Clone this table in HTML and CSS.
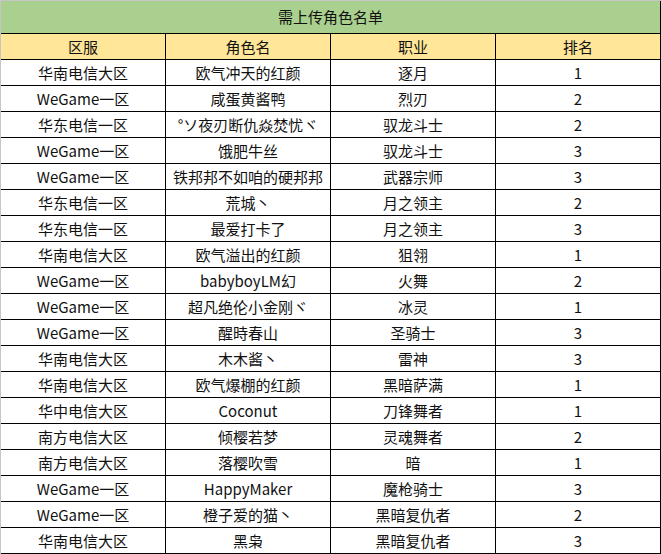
FILE: index.html
```html
<!DOCTYPE html>
<html lang="zh-CN">
<head>
<meta charset="utf-8">
<title>需上传角色名单</title>
<link rel="stylesheet" href="styles.css">
</head>
<body>
<table class="sheet">
  <colgroup>
    <col class="c"><col class="c"><col class="c"><col class="c">
  </colgroup>
  <tr class="title-row"><td colspan="4" class="title">需上传角色名单</td></tr>
  <tr class="head-row"><td>区服</td><td>角色名</td><td>职业</td><td>排名</td></tr>
  <tr><td>华南电信大区</td><td>欧气冲天的红颜</td><td>逐月</td><td>1</td></tr>
  <tr><td>WeGame一区</td><td>咸蛋黄酱鸭</td><td>烈刃</td><td>2</td></tr>
  <tr><td>华东电信一区</td><td>°ソ夜刃断仇焱焚忧ヾ</td><td>驭龙斗士</td><td>2</td></tr>
  <tr><td>WeGame一区</td><td>饿肥牛丝</td><td>驭龙斗士</td><td>3</td></tr>
  <tr><td>WeGame一区</td><td>铁邦邦不如咱的硬邦邦</td><td>武器宗师</td><td>3</td></tr>
  <tr><td>华东电信一区</td><td>荒城丶</td><td>月之领主</td><td>2</td></tr>
  <tr><td>华东电信一区</td><td>最爱打卡了</td><td>月之领主</td><td>3</td></tr>
  <tr><td>华南电信大区</td><td>欧气溢出的红颜</td><td>狙翎</td><td>1</td></tr>
  <tr><td>WeGame一区</td><td>babyboyLM幻</td><td>火舞</td><td>2</td></tr>
  <tr><td>WeGame一区</td><td>超凡绝伦小金刚ヾ</td><td>冰灵</td><td>1</td></tr>
  <tr><td>WeGame一区</td><td>醒時春山</td><td>圣骑士</td><td>3</td></tr>
  <tr><td>华南电信大区</td><td>木木酱丶</td><td>雷神</td><td>3</td></tr>
  <tr><td>华南电信大区</td><td>欧气爆棚的红颜</td><td>黑暗萨满</td><td>1</td></tr>
  <tr><td>华中电信大区</td><td>Coconut</td><td>刀锋舞者</td><td>1</td></tr>
  <tr><td>南方电信大区</td><td>倾樱若梦</td><td>灵魂舞者</td><td>2</td></tr>
  <tr><td>南方电信大区</td><td>落樱吹雪</td><td>暗</td><td>1</td></tr>
  <tr><td>WeGame一区</td><td>HappyMaker</td><td>魔枪骑士</td><td>3</td></tr>
  <tr><td>WeGame一区</td><td>橙子爱的猫丶</td><td>黑暗复仇者</td><td>2</td></tr>
  <tr><td>华南电信大区</td><td>黑枭</td><td>黑暗复仇者</td><td>3</td></tr>
</table>
</body>
</html>
```
FILE: styles.css
```css
html, body {
  margin: 0;
  padding: 0;
  background: #ffffff;
}

.sheet {
  border-collapse: separate;
  border-spacing: 0;
  table-layout: fixed;
  width: 661px;
  border-top: 1px solid #c6c6c6;
  border-left: 1px solid #c6c6c6;
  font-family: "Noto Sans CJK SC", "Noto Sans", sans-serif;
  font-size: 15px;
  color: #111111;
}

.sheet .c {
  width: 165px;
}

.sheet tr {
  height: 26px;
}

.sheet td {
  padding: 0;
  text-align: center;
  vertical-align: middle;
  line-height: 25px;
  white-space: nowrap;
  border-right: 1px solid #000000;
  border-bottom: 1px solid #000000;
  overflow: hidden;
}

.sheet .title-row {
  height: 33px;
}

.sheet .title {
  background: #a9d08e;
  line-height: 32px;
}

.sheet .head-row td {
  background: #ffe699;
}
```
